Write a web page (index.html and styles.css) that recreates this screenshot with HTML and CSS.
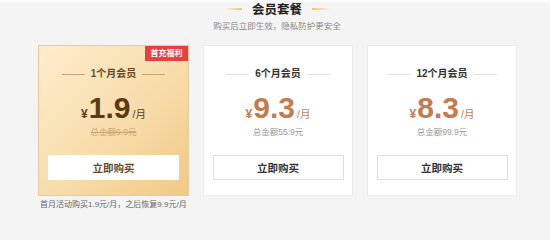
FILE: index.html
```html
<!DOCTYPE html>
<html lang="zh-CN">
<head>
<meta charset="utf-8">
<link rel="stylesheet" href="styles.css">
</head>
<body>
<div class="page">
  <div class="head">
    <div class="title-row">
      <span class="deco deco-l"></span>
      <h1 class="title">会员套餐</h1>
      <span class="deco deco-r"></span>
    </div>
    <p class="subtitle">购买后立即生效，隐私防护更安全</p>
  </div>

  <div class="plans">
    <div class="plan plan-hot">
      <span class="badge">首充福利</span>
      <div class="plan-name"><span class="line"></span><span class="name">1个月会员</span><span class="line"></span></div>
      <div class="price"><span class="yen">¥</span><span class="num">1.9</span><span class="unit">/月</span></div>
      <div class="total strike">总金额9.9元</div>
      <button class="buy">立即购买</button>
    </div>
    <div class="plan">
      <div class="plan-name"><span class="line"></span><span class="name">6个月会员</span><span class="line"></span></div>
      <div class="price"><span class="yen">¥</span><span class="num">9.3</span><span class="unit">/月</span></div>
      <div class="total">总金额55.9元</div>
      <button class="buy">立即购买</button>
    </div>
    <div class="plan">
      <div class="plan-name"><span class="line"></span><span class="name">12个月会员</span><span class="line"></span></div>
      <div class="price"><span class="yen">¥</span><span class="num">8.3</span><span class="unit">/月</span></div>
      <div class="total">总金额99.9元</div>
      <button class="buy">立即购买</button>
    </div>
  </div>

  <p class="note">首月活动购买1.9元/月，之后恢复9.9元/月</p>
</div>
</body>
</html>
```

FILE: styles.css
```css
* { box-sizing: border-box; }
html, body {
  margin: 0;
  padding: 0;
  background: #f4f4f4;
}
body {
  font-family: "Liberation Sans", "Noto Sans CJK SC", sans-serif;
  color: #333;
  width: 550px;
  height: 231px;
  overflow: hidden;
}
.page {
  border-top: 2px solid #fbfbfb;
}
.head {
  display: flex;
  flex-direction: column;
  align-items: center;
  padding-left: 4px;
}
.title-row {
  display: flex;
  align-items: center;
  gap: 10px;
  height: 16px;
}
.title {
  margin: 0;
  font-size: 12.5px;
  font-weight: bold;
  color: #222;
  line-height: 16px;
}
.deco {
  width: 18px;
  height: 2px;
  margin-top: -2px;
}
.deco-l { background: linear-gradient(90deg, rgba(245,196,106,0), #f3c268); }
.deco-r { background: linear-gradient(90deg, #f3c268, rgba(245,196,106,0)); }
.subtitle {
  margin: 2px 0 0;
  font-size: 8.5px;
  line-height: 12px;
  color: #888;
}
.plans {
  display: flex;
  gap: 14px;
  padding-left: 38px;
  margin-top: 13px;
}
.plan {
  position: relative;
  width: 150px;
  height: 151px;
  background: #fff;
  border: 1px solid #ebebeb;
  display: flex;
  flex-direction: column;
  align-items: center;
  padding: 0 9px;
}
.plan-hot {
  width: 151px;
  border-color: #e9caa0;
  background: linear-gradient(135deg, #fdeccc 0%, #f8deae 50%, #f1c983 100%);
}
.badge {
  position: absolute;
  top: 0;
  right: 0;
  width: 43px;
  height: 15px;
  background: #e8403f;
  color: #fff;
  font-size: 8px;
  font-weight: bold;
  line-height: 15px;
  text-align: center;
}
.plan-name {
  display: flex;
  align-items: center;
  gap: 6px;
  margin-top: 21px;
  height: 14px;
}
.plan-name .line {
  width: 23px;
  height: 1px;
  background: #e2e2e2;
}
.plan-hot .plan-name .line { background: #c9a576; }
.name {
  font-size: 10px;
  font-weight: bold;
  color: #333;
  line-height: 14px;
}
.plan-hot .name { color: #6a4a1f; }
.price {
  display: flex;
  align-items: baseline;
  margin-top: 10px;
  height: 34px;
  color: #c37b4f;
  font-weight: bold;
}
.plan-hot .price { color: #5a3b13; }
.yen { font-size: 12px; margin-right: 1px; }
.num { font-size: 30px; line-height: 34px; }
.unit { font-size: 10.5px; font-weight: normal; margin-left: 2px; }
.total {
  margin-top: 1px;
  font-size: 8.5px;
  line-height: 12px;
  color: #999;
}
.total.strike {
  color: #c9a574;
  text-decoration: line-through;
}
.buy {
  margin-top: 17px;
  width: 131px;
  height: 25px;
  background: #fff;
  border: 1px solid #dedede;
  font-family: "Liberation Sans", "Noto Sans CJK SC", sans-serif;
  font-size: 10.5px;
  font-weight: bold;
  color: #333;
  padding: 0;
  cursor: pointer;
}
.plan-hot .buy {
  border-color: #fff;
  color: #6a4a1f;
}
.note {
  margin: 3px 0 0 40px;
  font-size: 8px;
  line-height: 12px;
  color: #666;
}
```
